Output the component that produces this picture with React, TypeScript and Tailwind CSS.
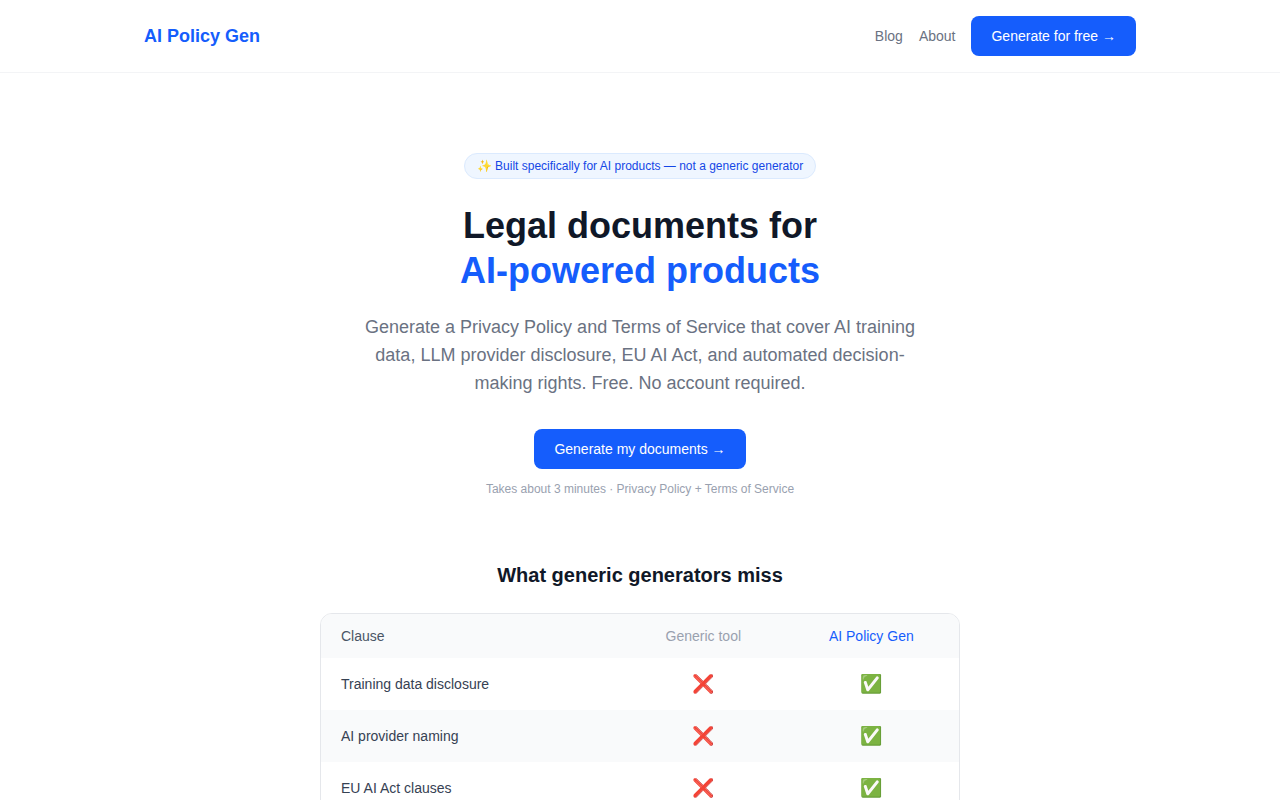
const clauses = [
  { name: 'Training data disclosure' },
  { name: 'AI provider naming' },
  { name: 'EU AI Act clauses' },
]

function Header() {
  return (
    <header className="border-b border-gray-100">
      <div className="max-w-5xl mx-auto px-4 py-4 flex items-center justify-between">
        <span className="text-lg font-bold text-blue-600">AI Policy Gen</span>
        <nav className="flex items-center gap-4">
          <a href="#blog" className="text-sm text-gray-500">Blog</a>
          <a href="#about" className="text-sm text-gray-500">About</a>
          <a href="#generate" className="bg-blue-600 text-white text-sm px-5 py-2.5 rounded-lg">
            Generate for free →
          </a>
        </nav>
      </div>
    </header>
  )
}

function Hero() {
  return (
    <section className="max-w-3xl mx-auto px-4 pt-20 pb-16 text-center">
      <div className="inline-block bg-blue-50 text-blue-700 text-xs px-3 py-1 rounded-full border border-blue-100 mb-6">
        ✨ Built specifically for AI products — not a generic generator
      </div>
      <h1 className="text-4xl font-bold text-gray-900 leading-tight mb-5">
        Legal documents for
        <br />
        <span className="text-blue-600">AI-powered products</span>
      </h1>
      <p className="text-lg text-gray-500 max-w-xl mx-auto mb-8">
        Generate a Privacy Policy and Terms of Service that cover AI training data, LLM provider
        disclosure, EU AI Act, and automated decision-making rights. Free. No account required.
      </p>
      <a href="#generate" className="inline-block bg-blue-600 text-white text-sm px-5 py-2.5 rounded-lg">
        Generate my documents →
      </a>
      <p className="text-xs text-gray-400 mt-3">
        Takes about 3 minutes · Privacy Policy + Terms of Service
      </p>
    </section>
  )
}

function Comparison() {
  return (
    <section className="max-w-2xl mx-auto px-4">
      <h2 className="text-xl font-bold text-gray-900 text-center mb-6">What generic generators miss</h2>
      <div className="rounded-xl border border-gray-200 overflow-hidden">
        <table className="w-full table-fixed text-sm">
          <thead>
            <tr className="bg-gray-50">
              <th className="text-left px-5 py-3 font-medium text-gray-600">Clause</th>
              <th className="w-[160.6px] px-5 py-3 font-medium text-gray-400">Generic tool</th>
              <th className="w-[175.4px] px-5 py-3 font-medium text-blue-600">AI Policy Gen</th>
            </tr>
          </thead>
          <tbody>
            {clauses.map((clause) => (
              <tr key={clause.name} className="even:bg-gray-50">
                <td className="px-5 py-3 text-gray-700">{clause.name}</td>
                <td className="px-5 py-3 text-center text-lg">❌</td>
                <td className="px-5 py-3 text-center text-lg">✅</td>
              </tr>
            ))}
          </tbody>
        </table>
      </div>
    </section>
  )
}

export default function App() {
  return (
    <main className="h-screen overflow-hidden bg-white font-['Liberation_Sans',Arial,sans-serif]">
      <Header />
      <Hero />
      <Comparison />
    </main>
  )
}
